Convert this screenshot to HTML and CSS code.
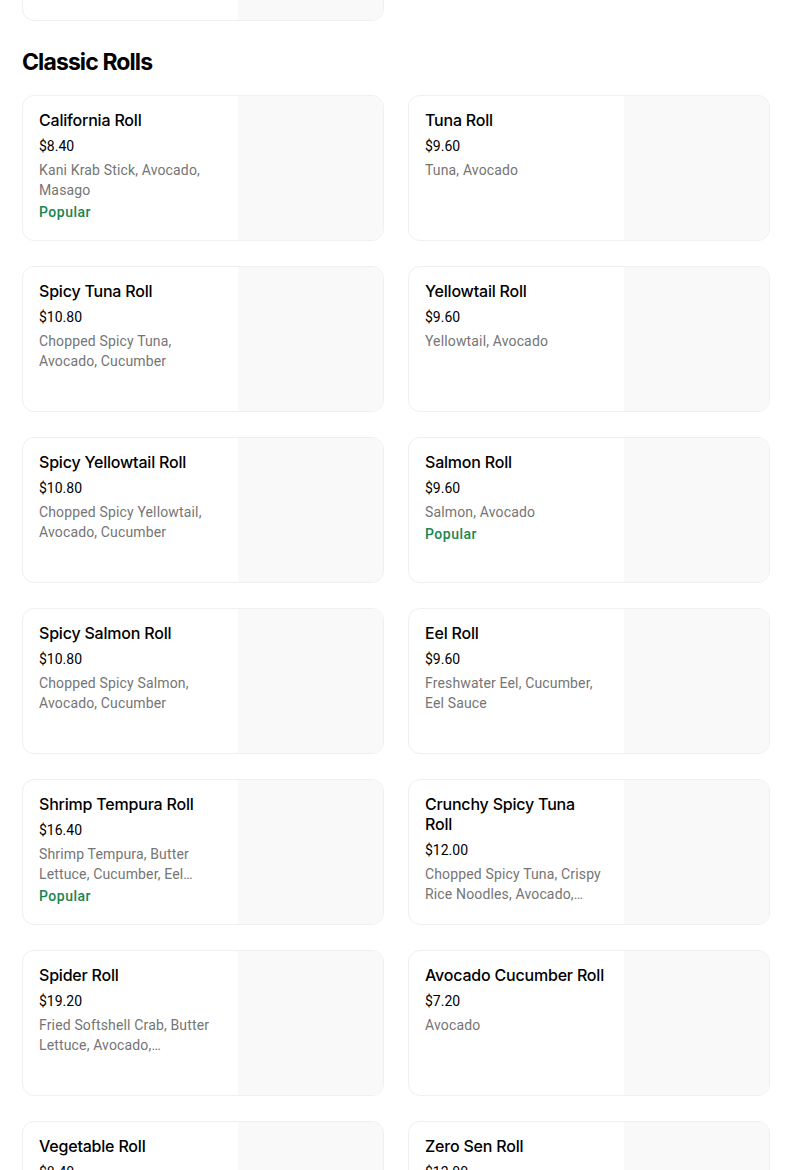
FILE: index.html
```html
<!DOCTYPE html>
<html>
<head>
<meta charset="utf-8">
<link rel="stylesheet" href="styles.css">
</head>
<body>
<div class="page">
  <div class="grid prev">
    <div class="card tail"><div class="info"></div><div class="thumb"></div></div>
  </div>
  <h2 class="section-title">Classic Rolls</h2>
  <div class="grid">
    <div class="card"><div class="info"><div class="name">California Roll</div><div class="price">$8.40</div><div class="desc">Kani Krab Stick, Avocado, Masago</div><div class="tag">Popular</div></div><div class="thumb"></div></div>
    <div class="card"><div class="info"><div class="name">Tuna Roll</div><div class="price">$9.60</div><div class="desc">Tuna, Avocado</div></div><div class="thumb"></div></div>
    <div class="card"><div class="info"><div class="name">Spicy Tuna Roll</div><div class="price">$10.80</div><div class="desc">Chopped Spicy Tuna, Avocado, Cucumber</div></div><div class="thumb"></div></div>
    <div class="card"><div class="info"><div class="name">Yellowtail Roll</div><div class="price">$9.60</div><div class="desc">Yellowtail, Avocado</div></div><div class="thumb"></div></div>
    <div class="card"><div class="info"><div class="name">Spicy Yellowtail Roll</div><div class="price">$10.80</div><div class="desc">Chopped Spicy Yellowtail, Avocado, Cucumber</div></div><div class="thumb"></div></div>
    <div class="card"><div class="info"><div class="name">Salmon Roll</div><div class="price">$9.60</div><div class="desc">Salmon, Avocado</div><div class="tag">Popular</div></div><div class="thumb"></div></div>
    <div class="card"><div class="info"><div class="name">Spicy Salmon Roll</div><div class="price">$10.80</div><div class="desc">Chopped Spicy Salmon, Avocado, Cucumber</div></div><div class="thumb"></div></div>
    <div class="card"><div class="info"><div class="name">Eel Roll</div><div class="price">$9.60</div><div class="desc">Freshwater Eel, Cucumber, Eel Sauce</div></div><div class="thumb"></div></div>
    <div class="card"><div class="info"><div class="name">Shrimp Tempura Roll</div><div class="price">$16.40</div><div class="desc">Shrimp Tempura, Butter Lettuce, Cucumber, Eel Sauce, Sesame</div><div class="tag">Popular</div></div><div class="thumb"></div></div>
    <div class="card"><div class="info"><div class="name">Crunchy Spicy Tuna Roll</div><div class="price">$12.00</div><div class="desc">Chopped Spicy Tuna, Crispy Rice Noodles, Avocado, Cucumber</div></div><div class="thumb"></div></div>
    <div class="card"><div class="info"><div class="name">Spider Roll</div><div class="price">$19.20</div><div class="desc">Fried Softshell Crab, Butter Lettuce, Avocado, Cucumber, Eel Sauce</div></div><div class="thumb"></div></div>
    <div class="card"><div class="info"><div class="name">Avocado Cucumber Roll</div><div class="price">$7.20</div><div class="desc">Avocado</div></div><div class="thumb"></div></div>
    <div class="card"><div class="info"><div class="name">Vegetable Roll</div><div class="price">$8.40</div><div class="desc">Avocado, Cucumber, Asparagus</div></div><div class="thumb"></div></div>
    <div class="card"><div class="info"><div class="name">Zero Sen Roll</div><div class="price">$12.00</div><div class="desc">Spicy Tuna, Avocado</div></div><div class="thumb"></div></div>
  </div>
</div>
</body>
</html>
```
FILE: styles.css
```css
* { box-sizing: border-box; }
html, body { margin: 0; padding: 0; background: #ffffff; }
body { font-family: Roboto, "Liberation Sans", Arial, sans-serif; color: #000; }
.page { padding: 0 0 0 22px; width: 771px; }
.grid {
  display: grid;
  grid-template-columns: 362px 362px;
  column-gap: 24px;
  row-gap: 25px;
}
.prev { margin-top: -125px; }
.card {
  display: flex;
  height: 146px;
  border: 1px solid #efefef;
  border-radius: 12px;
  overflow: hidden;
  background: #fff;
}
.info {
  flex: 1;
  padding: 14px 16px 16px 16px;
  min-width: 0;
}
.thumb {
  width: 145px;
  flex: none;
  background: #f9f9f9;
}
.name {
  font-family: Inter, Roboto, sans-serif;
  font-size: 16px;
  line-height: 20px;
  font-weight: 500;
  letter-spacing: -0.2px;
  color: #000;
  margin-bottom: 6px;
  max-width: 180px;
}
.price {
  font-size: 14px;
  line-height: 20px;
  color: #000;
  margin-bottom: 4px;
}
.desc {
  font-size: 14px;
  line-height: 20px;
  letter-spacing: 0.15px;
  color: #757575;
  display: -webkit-box;
  -webkit-line-clamp: 2;
  -webkit-box-orient: vertical;
  overflow: hidden;
}
.tag {
  font-size: 14px;
  line-height: 20px;
  font-weight: 500;
  letter-spacing: 0.5px;
  color: #1a8550;
  margin-top: 2px;
}
.section-title {
  font-family: Inter, Roboto, sans-serif;
  font-size: 23px;
  line-height: 32px;
  font-weight: 700;
  margin: 0;
  padding: 25px 0 0 0;
  height: 74px;
  letter-spacing: -0.9px;
}
```
